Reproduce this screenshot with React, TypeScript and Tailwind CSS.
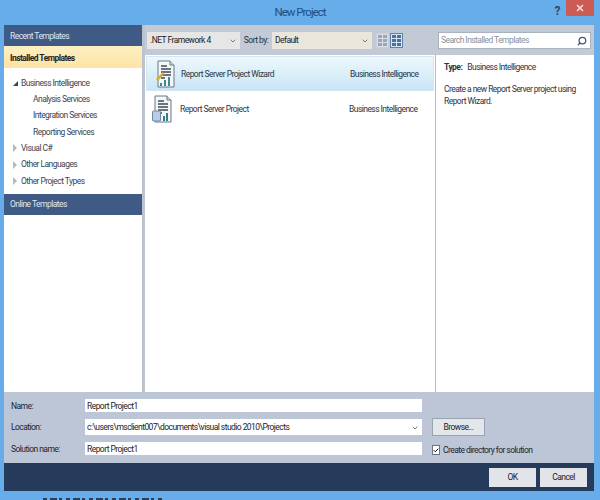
import React from 'react';
import { Search, Check, ChevronDown, X } from 'lucide-react';

const font = "font-['Roboto','Liberation_Sans',Arial,sans-serif]";

const ReportIcon = ({ wizard }: { wizard?: boolean }) => (
  <svg width="20" height="28" viewBox="0 0 20 28">
    <path d="M3 1h12l4 4v22H3z" fill="#f4f6f8" stroke="#6b7683" strokeWidth="1" />
    <path d="M15 1v4h4" fill="#d5dbe2" stroke="#6b7683" strokeWidth="1" />
    <path d="M6 6h6M6 9h10M6 12h10M6 15h10M6 18h4" stroke="#3f4a57" strokeWidth="1.4" />
    {wizard ? (
      <>
        <path d="M1 19l7-7 1 2-6 7z" fill="#e0a92e" />
        <path d="M5 26v-3h2v3zM9 26v-6h2v6zM13 26v-9h2v9z" fill="#3c8a8e" />
      </>
    ) : (
      <>
        <rect x="0.5" y="16" width="8" height="10" rx="1" fill="#b9cde6" stroke="#6f88a8" />
        <path d="M11 26v-5h2v5zM14 26v-8h2v8z" fill="#2f7f86" />
      </>
    )}
  </svg>
);

const ViewIcon = ({ active }: { active?: boolean }) => (
  <div className={`w-[13px] h-[15px] grid grid-cols-2 gap-[1px] p-[1px] border ${active ? 'border-[#5e80ad] bg-[#d7e4f2]' : 'border-[#c9ced8] bg-[#d9dde5]'}`}>
    {[0, 1, 2, 3, 4, 5].map((i) => (
      <span key={i} className={active ? 'bg-[#4d6f9c]' : 'bg-[#9aa5b5]'} />
    ))}
  </div>
);

const Tree = ({ label, arrow, child }: { label: string; arrow?: 'open' | 'closed'; child?: boolean }) => (
  <div className={`h-[16.3px] flex items-center whitespace-nowrap ${child ? 'pl-[29px]' : 'pl-[9px]'}`}>
    {arrow === 'open' && <span className="w-0 h-0 mr-[3px] border-l-[5px] border-l-transparent border-b-[5px] border-b-[#444]" />}
    {arrow === 'closed' && <span className="w-0 h-0 mr-[4px] border-y-[4px] border-y-transparent border-l-[4px] border-l-[#b8b8b8]" />}
    {label}
  </div>
);

const FormField = ({ label, value, dropdown, tall }: { label: string; value: string; dropdown?: boolean; tall?: boolean }) => (
  <div className={`flex items-center ${tall ? 'h-[16px]' : 'h-[13px]'}`}>
    <span className="w-[74px] pt-[1px] text-[#1c2430]">{label}</span>
    <div className="w-[337px] h-full bg-white flex items-center justify-between pl-[2px] pr-[3px] pt-[1px] text-[#222]">
      <span>{value}</span>
      {dropdown && <ChevronDown size={8} strokeWidth={3} className="text-[#777]" />}
    </div>
  </div>
);

export default function App() {
  return (
    <div className={`${font} w-[600px] h-[500px] overflow-hidden flex flex-col bg-[#68ace9] text-[8.5px] tracking-[-0.55px] text-[#2b3440]`}>
      {/* title bar */}
      <div className="h-[25px] shrink-0 flex items-center relative bg-[#66ade9]">
        <span className="flex-1 text-center text-[11.5px] tracking-[-1px] text-[#1f4f82]">New Project</span>
        <span className="absolute right-[40px] top-[2px] text-[12px] font-bold text-[#2c4a6d]">?</span>
        <div className="absolute right-[6px] top-0 w-[28px] h-[16px] bg-[#cc5a55] flex items-center justify-center">
          <X size={10} strokeWidth={4} className="text-[#f7dcd6]" />
        </div>
      </div>

      <div className="h-[466px] shrink-0 ml-[4px] mr-[6px] flex flex-col">
        <div className="flex h-[367px] shrink-0">
          {/* left panel */}
          <div className="w-[138px] shrink-0 bg-white flex flex-col">
            <div className="h-[21px] bg-[#3f5a85] text-[#dfe7f2] flex items-center pl-[6px] pt-[2px]">Recent Templates</div>
            <div className="h-[22px] bg-gradient-to-b from-[#fdf0c4] to-[#fde3a4] text-[#222] font-bold flex items-center pl-[6px] pt-[2px]">Installed Templates</div>
            <div className="h-[126px] pt-[7px] text-[#3c4450]">
              <Tree label="Business Intelligence" arrow="open" />
              <Tree label="Analysis Services" child />
              <Tree label="Integration Services" child />
              <Tree label="Reporting Services" child />
              <Tree label="Visual C#" arrow="closed" />
              <Tree label="Other Languages" arrow="closed" />
              <Tree label="Other Project Types" arrow="closed" />
            </div>
            <div className="h-[21px] bg-[#3f5a85] text-[#dfe7f2] flex items-center pl-[6px]">Online Templates</div>
          </div>
          <div className="w-[3px] shrink-0 bg-[#bcc3cf]" />

          {/* center and detail */}
          <div className="flex-1 min-w-0 flex flex-col bg-white">
            <div className="h-[30px] shrink-0 bg-[#c3cad6] flex items-center pt-[1px] whitespace-nowrap">
              <div className="ml-[2px] w-[93px] h-[17px] shrink-0 bg-[#e6e6e6] flex items-center justify-between pl-[3px] pr-[3px] text-[#222]">
                <span>.NET Framework 4</span>
                <ChevronDown size={8} strokeWidth={3} className="text-[#777]" />
              </div>
              <span className="w-[32px] shrink-0 text-center text-[#27303c]">Sort by:</span>
              <div className="w-[100px] h-[17px] shrink-0 bg-[#e9e6dc] flex items-center justify-between pl-[3px] pr-[3px] text-[#222]">
                <span>Default</span>
                <ChevronDown size={8} strokeWidth={3} className="text-[#777]" />
              </div>
              <div className="ml-[4px] flex gap-[1px] shrink-0">
                <ViewIcon />
                <ViewIcon active />
              </div>
              <div className="ml-[35px] w-[153px] h-[17px] shrink-0 bg-white border border-[#a9b2bf] flex items-center justify-between pl-[2px] pr-[3px] text-[#8a919b]">
                <span>Search Installed Templates</span>
                <Search size={10} strokeWidth={3} className="text-[#3d5a7a] -scale-x-100" />
              </div>
            </div>
            <div className="flex-1 flex min-h-0 whitespace-nowrap">
              <div className="w-[291px] shrink-0 border-r border-[#b4bbc7] pt-[1px]">
                <div className="h-[35px] ml-[1px] mr-[1px] bg-gradient-to-b from-[#eef7fc] to-[#c9e6f6] border border-[#d3e7f2] flex items-center text-[#2b3440]">
                  <div className="w-[34px] flex justify-center pl-[1px]"><ReportIcon wizard /></div>
                  <span className="w-[169px] pt-[2px]">Report Server Project Wizard</span>
                  <span className="pt-[2px]">Business Intelligence</span>
                </div>
                <div className="h-[35px] ml-[1px] mr-[1px] flex items-center">
                  <div className="w-[34px] flex justify-center pr-[2px]"><ReportIcon /></div>
                  <span className="w-[169px] pt-[2px]">Report Server Project</span>
                  <span className="pt-[2px]">Business Intelligence</span>
                </div>
              </div>
              <div className="flex-1 pl-[8px] pr-[3px] pt-[6px] text-[#2b3440] whitespace-normal">
                <div className="mb-[9px]"><span className="font-bold mr-[5px]">Type:</span>Business Intelligence</div>
                <div className="leading-[12.5px]">Create a new Report Server project using Report Wizard.</div>
              </div>
            </div>
          </div>
        </div>

        {/* form */}
        <div className="h-[71px] shrink-0 bg-[#bcc6d6] flex pl-[7px] pt-[7px] whitespace-nowrap">
          <div className="flex flex-col gap-[7px] w-[411px]">
            <FormField label="Name:" value="Report Project1" />
            <FormField label="Location:" value="c:\users\msclient007\documents\visual studio 2010\Projects" dropdown tall />
            <FormField label="Solution name:" value="Report Project1" />
          </div>
          <div className="ml-[10px] pt-[19px] flex flex-col gap-[8px]">
            <div className="w-[53px] h-[18px] bg-[#e3e6ea] border border-[#9aa3b0] flex items-center justify-center pt-[1px] text-[#222]">Browse...</div>
            <div className="flex items-center gap-[3px] text-[#1c2430]">
              <span className="w-[8px] h-[10px] bg-white border border-[#6b7683] flex items-center justify-center">
                <Check size={9} strokeWidth={4} className="text-[#111]" />
              </span>
              Create directory for solution
            </div>
          </div>
        </div>

        {/* footer */}
        <div className="h-[28px] shrink-0 bg-[#263a5c] flex items-center justify-end gap-[4px] pr-[7px]">
          <div className="w-[47px] h-[19px] bg-[#e1e4e9] flex items-center justify-center text-[#222]">OK</div>
          <div className="w-[47px] h-[19px] bg-[#e1e4e9] flex items-center justify-center text-[#222]">Cancel</div>
        </div>
      </div>

      {/* cut-off page text below the window */}
      <svg className="ml-[43px] mt-[7px] shrink-0" width="122" height="2">
        <line x1="0" y1="1" x2="122" y2="1" stroke="#2b3f5c" strokeWidth="2" strokeDasharray="4 3 7 2 3 4" />
      </svg>
    </div>
  );
}
